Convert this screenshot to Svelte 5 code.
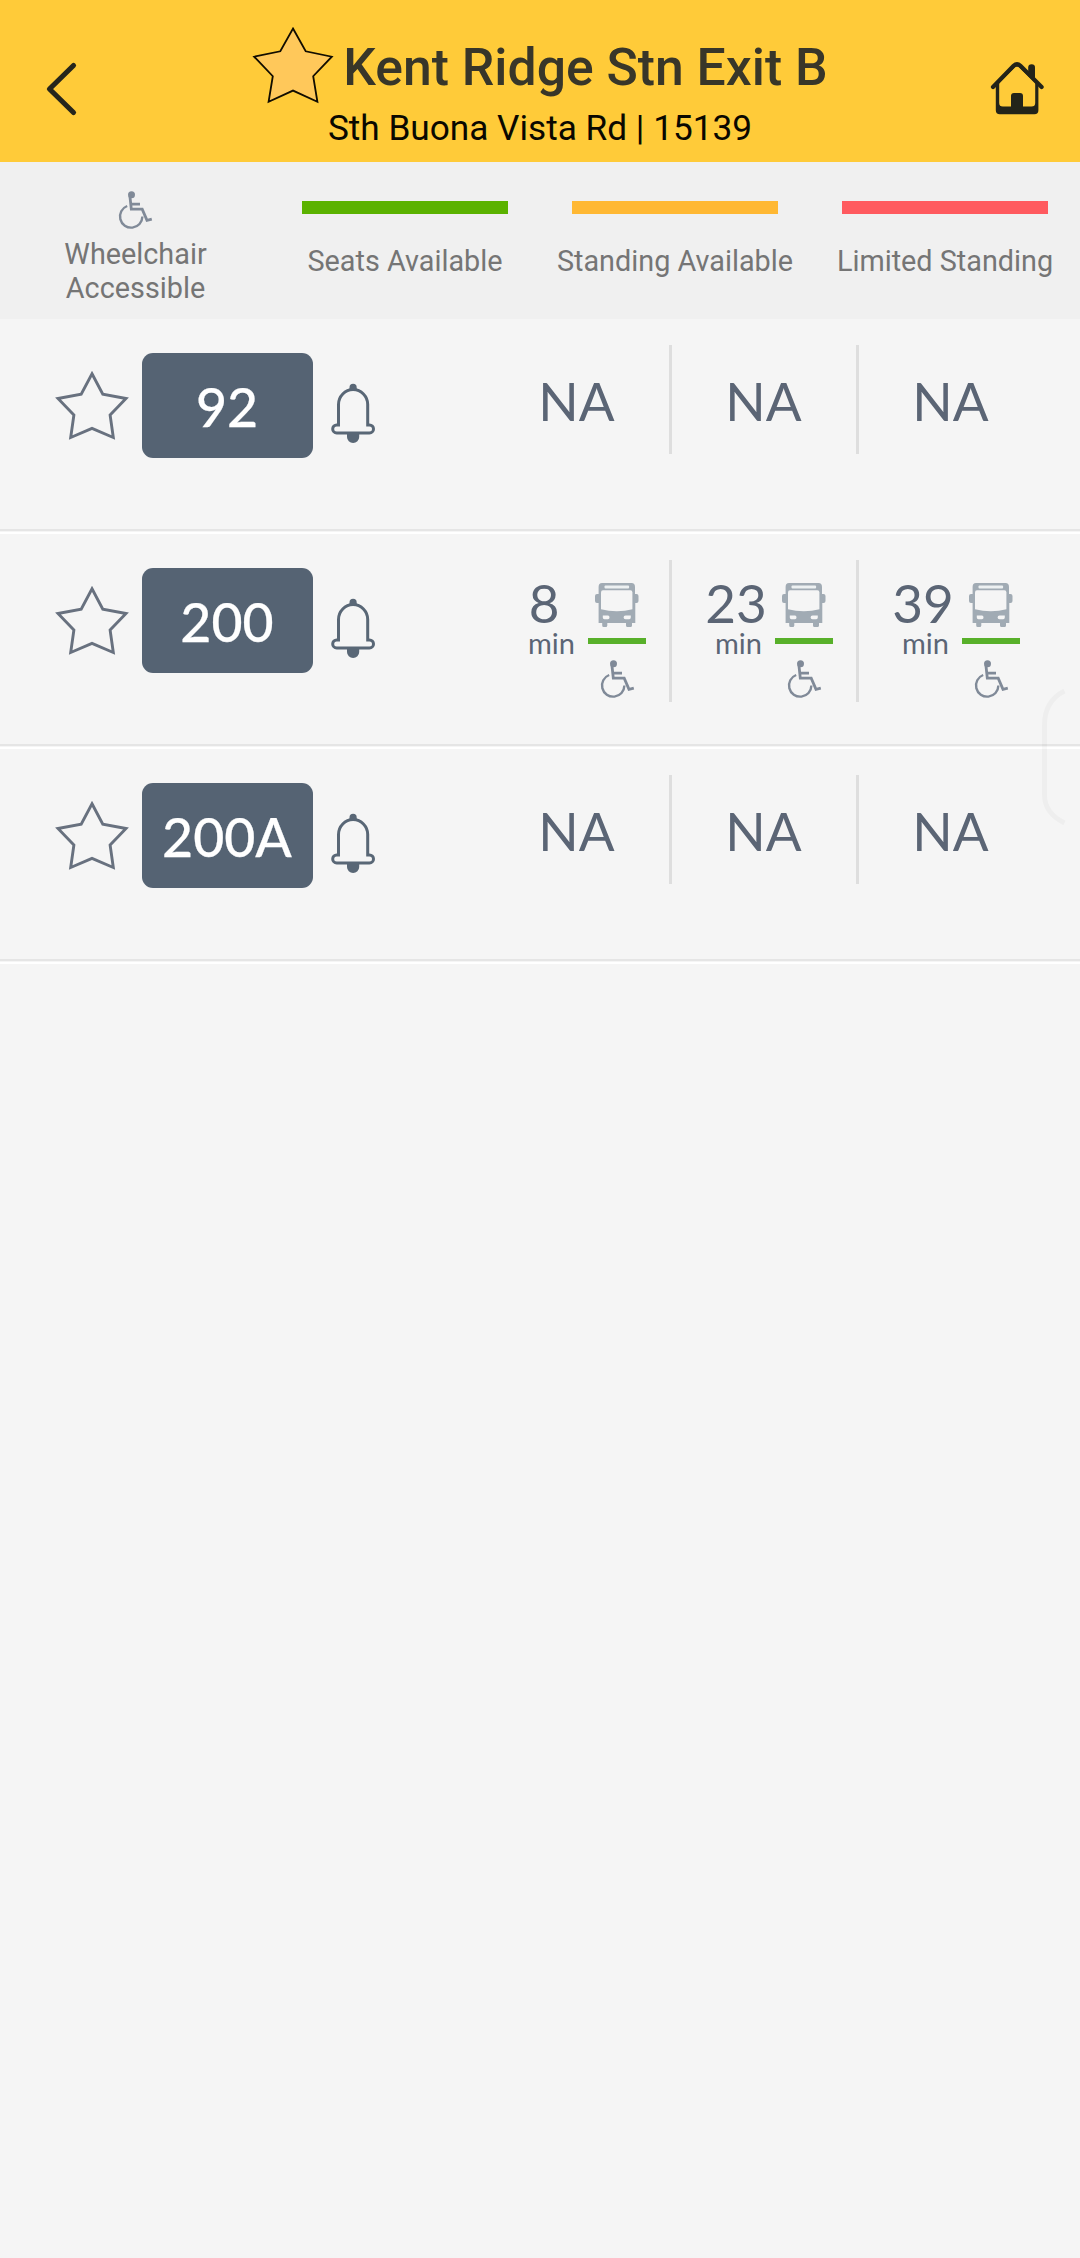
<script>
  const legend = [
    { label: 'Seats Available', tone: 'green' },
    { label: 'Standing Available', tone: 'amber' },
    { label: 'Limited Standing', tone: 'red' }
  ];

  const services = [
    { number: '92', arrivals: [null, null, null] },
    { number: '200', arrivals: ['8', '23', '39'] },
    { number: '200A', arrivals: [null, null, null] }
  ];
</script>

{#snippet wheelchair()}
  <svg class="wheelchair" width="36" height="40" viewBox="0 0 36 40" fill="none" stroke="#808a98" stroke-width="2.8">
    <circle cx="13.5" cy="4.7" r="3.5" fill="#808a98" stroke="none" />
    <path d="M11.9 6 13.3 19.2H24.2L29 30.4 33.8 29.2M13 14.1H22" />
    <path d="M9.2 16A11.2 11.2 0 1 0 24.4 26.6" stroke-width="2.4" />
  </svg>
{/snippet}

<div class="screen">
  <header>
    <svg class="back" width="36" height="60" viewBox="0 0 36 60" fill="none" stroke="#26261c" stroke-width="5.2" stroke-linecap="round" stroke-linejoin="round">
      <path d="M29.5 6.5 5.5 30 29.5 53.5" />
    </svg>
    <div class="heading">
      <div class="title">
        <svg width="82" height="78" viewBox="0 0 82 78" fill="#ffc85a" stroke="#120d00" stroke-width="1.8">
          <path d="M41 2.5 53.7 25.3 79.8 30.7 61.2 50.2 65.4 75.8 41 64.6 16.6 75.8 20.8 50.2 2.2 30.7 28.3 25.3Z" />
        </svg>
        <h1>Kent Ridge Stn Exit B</h1>
      </div>
      <p>Sth Buona Vista Rd | 15139</p>
    </div>
    <svg class="home" width="56" height="58" viewBox="0 0 56 58" fill="#232419">
      <path d="M3 27 23.6 5.8Q27 2.6 30.4 5.8L51.6 27" fill="none" stroke="#232419" stroke-width="4.2" stroke-linecap="round" />
      <path d="M38.2 16V7.5Q38.2 4.2 41.6 4.2T45 7.5V22Z" />
      <path fill-rule="evenodd" d="M5.8 24 27 3.5 48.4 24V50.3Q48.4 54.3 44.4 54.3H9.8Q5.8 54.3 5.8 50.3ZM9.2 23V43Q9.2 46.6 12.8 46.6H21V36Q21 33 24 33H30Q33 33 33 36V46.6H41.5Q45.2 46.6 45.2 43V23L29.2 7.4Q27 5.4 24.8 7.4Z" />
    </svg>
  </header>

  <section class="legend">
    <div class="key access">
      {@render wheelchair()}
      <span>Wheelchair<br />Accessible</span>
    </div>
    {#each legend as item}
      <div class="key">
        <i class={item.tone}></i>
        <span>{item.label}</span>
      </div>
    {/each}
  </section>

  <main>
    {#each services as service}
      <article>
        <svg class="star" width="76" height="72" viewBox="0 0 76 72" fill="none" stroke="#68717f" stroke-width="2.9">
          <path d="M38 4.8 48.8 25.2 72 29.5 56.1 45.9 59.3 68.5 38 59.3 16.7 68.5 19.9 45.9 4 29.5 27.2 25.2Z" />
        </svg>
        <div class="badge">{service.number}</div>
        <svg class="bell" width="46" height="62" viewBox="0 0 46 62" fill="none" stroke="#596776" stroke-width="3">
          <path d="M8.5 22.5a14.6 14.9 0 0 1 29.2 0v20.4h1.8a4 4 0 0 1 0 8h-32.8a4 4 0 0 1 0-8h1.8z" />
          <path d="M19.5 8V5.4a3.6 3.6 0 0 1 7.2 0V8zM17 51h12.2v4a6.1 6.1 0 0 1-12.2 0z" fill="#596776" stroke="none" />
        </svg>
        <div class="times">
          {#each service.arrivals as time}
            <div class="cell" class:live={time}>
              {#if time}
                <div class="eta">
                  <b class:single={time.length === 1}>{time}</b>
                  <small>min</small>
                </div>
                <div class="load">
                  <svg width="46" height="46" viewBox="0 0 46 46">
                    <path fill="#a1abb4" d="M8 1H37.5Q41 1 41 5V12H42.5Q44.5 12 44.5 14V19Q44.5 21 42.5 21H41.3V41H38V43.5Q38 45 36.5 45H33.5Q32 45 32 43.5V41H13.3V43.5Q13.3 45 11.8 45H9.7Q8.2 45 8.2 43.5V41H4.6V21H3Q1 21 1 19V14Q1 12 3 12H4.6V5Q4.6 1 8 1Z" />
                    <rect x="10.5" y="3.6" width="24.6" height="2.8" rx="1" fill="#edf1f2" />
                    <path fill="#f5f5f5" d="M9 8.3H36.4Q38.4 8.3 38.4 10.5V27.3Q31 29.2 22.8 29.2T7 27.3V10.5Q7 8.3 9 8.3Z" />
                    <path fill="#f5f5f5" d="M8.8 33.6H14Q15.5 33.6 15.5 35.4T14 37.2H10.4Q8.8 37.2 8.8 35.4ZM36.8 33.6H31.5Q29.6 33.6 29.6 35.4T31.5 37.2H35.2Q36.8 37.2 36.8 35.4Z" />
                  </svg>
                  <i></i>
                  {@render wheelchair()}
                </div>
              {:else}
                NA
              {/if}
            </div>
          {/each}
        </div>
      </article>
    {/each}
  </main>

  <!-- System edge-panel handle floating over the list -->
  <svg class="handle" width="30" height="144" viewBox="0 0 30 144" fill="none" stroke="#000" stroke-opacity=".027" stroke-width="5">
    <path d="M25.5 6Q5.5 16 5.5 40V110Q5.5 128 25.5 138" />
  </svg>
</div>

<style>
  :global(body) {
    margin: 0;
    background: #f5f5f5;
  }
  .screen {
    position: relative;
    width: 1080px;
    height: 2258px;
    background: #f5f5f5;
    font-family: Roboto, sans-serif;
    overflow: hidden;
  }
  svg {
    display: block;
    flex: none;
  }
  header {
    display: grid;
    grid-template-columns: 92px 1fr 56px;
    align-items: start;
    box-sizing: border-box;
    height: 162px;
    padding: 0 34px 0 44px;
    background: #ffcb39;
  }
  .back {
    margin-top: 59px;
  }
  .home {
    margin-top: 60px;
  }
  .heading {
    display: flex;
    flex-direction: column;
    align-items: center;
    padding: 26px 46px 0 0;
  }
  .title {
    display: flex;
    align-items: flex-start;
    gap: 9px;
  }
  h1 {
    margin: 12px 0 0;
    font-size: 51.7px;
    line-height: 60px;
    font-weight: 500;
    color: #383629;
    white-space: nowrap;
  }
  p {
    margin: 4px 0 0;
    font-size: 35.2px;
    line-height: 40px;
    color: #0a0800;
    white-space: nowrap;
  }
  .legend {
    display: grid;
    grid-template-columns: repeat(4, 270px);
    height: 157px;
    background: #f0f0f0;
  }
  .key {
    display: flex;
    flex-direction: column;
    align-items: center;
    padding-top: 39px;
    font-size: 28.8px;
    line-height: 34px;
    color: #757575;
    text-align: center;
    white-space: nowrap;
  }
  .key i {
    width: 206px;
    height: 13px;
    margin-bottom: 30px;
  }
  .access {
    padding: 28px 0 0 1px;
  }
  .access span {
    margin-top: 7px;
  }
  .green {
    background: #5bb200;
  }
  .amber {
    background: #ffb833;
  }
  .red {
    background: #ff5a5f;
  }
  article {
    display: flex;
    align-items: flex-start;
    box-sizing: border-box;
    height: 215px;
    padding: 26px 34px 0 54px;
    background: linear-gradient(#f5f5f5 210px, #e5e5e5 210px 212px, #f5f5f5 212px 213px, #fff 213px);
  }
  .star {
    margin-top: 24px;
  }
  .badge {
    box-sizing: border-box;
    width: 171px;
    height: 105px;
    margin: 8px 17px 0 12px;
    padding-right: 1px;
    border-radius: 11px;
    background: #556373;
    color: #fff;
    font: 500 53.6px/107px 'Lato Medium', Lato, sans-serif;
    -webkit-text-stroke: 0.25px #fff;
    text-align: center;
  }
  .bell {
    margin-top: 37px;
  }
  .times {
    display: flex;
    margin-left: auto;
    font-family: Lato, sans-serif;
    color: #5b6575;
  }
  .cell {
    box-sizing: border-box;
    width: 187px;
    height: 109px;
    padding: 24px 1px 0 0;
    border-right: 3px solid #dedede;
    font-size: 53px;
    line-height: 64px;
    text-align: center;
  }
  .cell:last-child {
    border-color: transparent;
  }
  .live {
    display: flex;
    height: 142px;
    padding: 18px 0 0 25px;
  }
  .eta {
    display: flex;
    flex-direction: column;
    align-items: center;
    width: 78px;
  }
  .eta b {
    font-weight: 400;
    line-height: 50px;
  }
  .eta .single {
    padding-right: 10px;
  }
  .eta small {
    padding-left: 5px;
    font-size: 29px;
    line-height: 30px;
  }
  .load {
    display: flex;
    flex-direction: column;
    align-items: center;
    width: 58px;
    padding-top: 4px;
  }
  .load i {
    width: 58px;
    height: 6px;
    margin: 10px 0 15px;
    background: #58b02a;
  }
  .load .wheelchair {
    margin-left: 2px;
  }
  .handle {
    position: absolute;
    right: 11px;
    top: 685px;
  }
</style>
